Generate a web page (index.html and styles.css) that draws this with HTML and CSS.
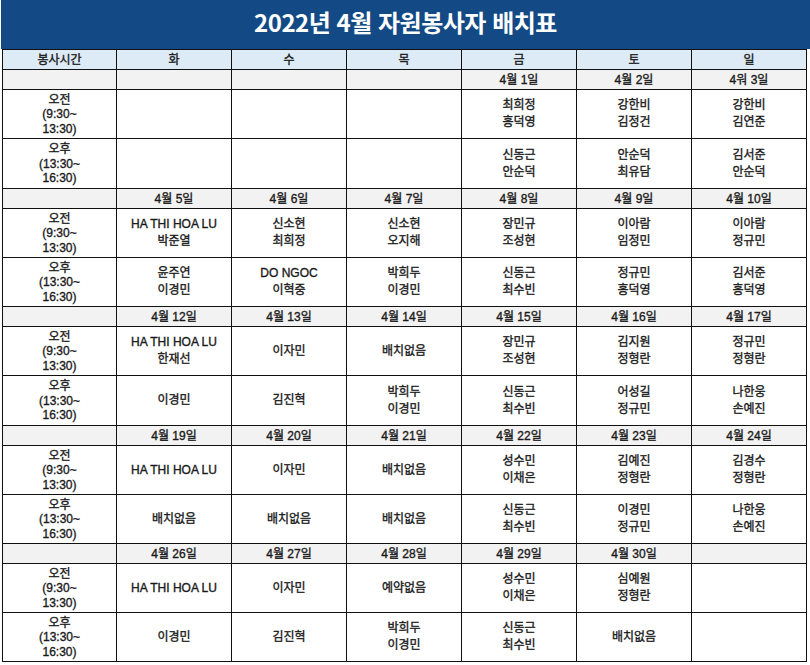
FILE: index.html
```html
<!DOCTYPE html>
<html lang="ko">
<head>
<meta charset="utf-8">
<title>2022년 4월 자원봉사자 배치표</title>
<link rel="stylesheet" href="styles.css">
</head>
<body>
<div class="title">2022년 4월 자원봉사자 배치표</div>
<table class="sched">
<colgroup><col class="c0"><col class="c"><col class="c"><col class="c"><col class="c"><col class="c"><col class="c"></colgroup>
<tr class="head"><td>봉사시간</td><td>화</td><td>수</td><td>목</td><td>금</td><td>토</td><td>일</td></tr>

<tr class="date"><td></td><td></td><td></td><td></td><td>4월 1일</td><td>4월 2일</td><td>4워 3일</td></tr>
<tr class="am"><td class="tm">오전<br>(9:30~<br>13:30)</td><td></td><td></td><td></td><td>최희정<br>홍덕영</td><td>강한비<br>김정건</td><td>강한비<br>김연준</td></tr>
<tr class="pm tall"><td class="tm">오후<br>(13:30~<br>16:30)</td><td></td><td></td><td></td><td>신동근<br>안순덕</td><td>안순덕<br>최유담</td><td>김서준<br>안순덕</td></tr>

<tr class="date"><td></td><td>4월 5일</td><td>4월 6일</td><td>4월 7일</td><td>4월 8일</td><td>4월 9일</td><td>4월 10일</td></tr>
<tr class="am"><td class="tm">오전<br>(9:30~<br>13:30)</td><td>HA THI HOA LU<br>박준열</td><td>신소현<br>최희정</td><td>신소현<br>오지해</td><td>장민규<br>조성현</td><td>이아람<br>임정민</td><td>이아람<br>정규민</td></tr>
<tr class="pm"><td class="tm">오후<br>(13:30~<br>16:30)</td><td>윤주연<br>이경민</td><td>DO NGOC<br>이혁중</td><td>박희두<br>이경민</td><td>신동근<br>최수빈</td><td>정규민<br>홍덕영</td><td>김서준<br>홍덕영</td></tr>

<tr class="date"><td></td><td>4월 12일</td><td>4월 13일</td><td>4월 14일</td><td>4월 15일</td><td>4월 16일</td><td>4월 17일</td></tr>
<tr class="am"><td class="tm">오전<br>(9:30~<br>13:30)</td><td>HA THI HOA LU<br>한재선</td><td>이자민</td><td>배치없음</td><td>장민규<br>조성현</td><td>김지원<br>정형란</td><td>정규민<br>정형란</td></tr>
<tr class="pm tall"><td class="tm">오후<br>(13:30~<br>16:30)</td><td>이경민</td><td>김진혁</td><td>박희두<br>이경민</td><td>신동근<br>최수빈</td><td>어성길<br>정규민</td><td>나한웅<br>손예진</td></tr>

<tr class="date"><td></td><td>4월 19일</td><td>4월 20일</td><td>4월 21일</td><td>4월 22일</td><td>4월 23일</td><td>4월 24일</td></tr>
<tr class="am"><td class="tm">오전<br>(9:30~<br>13:30)</td><td>HA THI HOA LU</td><td>이자민</td><td>배치없음</td><td>성수민<br>이채은</td><td>김예진<br>정형란</td><td>김경수<br>정형란</td></tr>
<tr class="pm"><td class="tm">오후<br>(13:30~<br>16:30)</td><td>배치없음</td><td>배치없음</td><td>배치없음</td><td>신동근<br>최수빈</td><td>이경민<br>정규민</td><td>나한웅<br>손예진</td></tr>

<tr class="date"><td></td><td>4월 26일</td><td>4월 27일</td><td>4월 28일</td><td>4월 29일</td><td>4월 30일</td><td></td></tr>
<tr class="am"><td class="tm">오전<br>(9:30~<br>13:30)</td><td>HA THI HOA LU</td><td>이자민</td><td>예약없음</td><td>성수민<br>이채은</td><td>심예원<br>정형란</td><td></td></tr>
<tr class="pm"><td class="tm">오후<br>(13:30~<br>16:30)</td><td>이경민</td><td>김진혁</td><td>박희두<br>이경민</td><td>신동근<br>최수빈</td><td>배치없음</td><td></td></tr>
</table>
</body>
</html>
```
FILE: styles.css
```css
html, body {
  margin: 0;
  padding: 0;
  background: #ffffff;
}
body {
  font-family: "Liberation Sans", "Noto Sans CJK KR", sans-serif;
  color: #1a1a1a;
}
.title {
  margin-left: 1px;
  height: 49px;
  background: #134a86;
  color: #ffffff;
  font-family: "Noto Sans CJK KR", sans-serif;
  font-weight: 700;
  font-size: 24px;
  line-height: 44px;
  text-align: center;
  letter-spacing: -0.5px;
}
.sched {
  margin-left: 2px;
  border-collapse: collapse;
  table-layout: fixed;
  width: 805px;
  font-size: 12px;
  font-weight: 400;
  -webkit-text-stroke: 0.35px #1a1a1a;
}
.c0 { width: 114px; }
.c { width: 115px; }
.sched td {
  border: 1px solid #111111;
  text-align: center;
  vertical-align: middle;
  padding: 0;
  line-height: 17px;
  overflow: hidden;
  white-space: nowrap;
}
.head td {
  background: #ddebf7;
  height: 19px;
  line-height: 18px;
}
.date td {
  background: #f2f2f2;
  height: 19px;
  line-height: 18px;
}
.am td { height: 47px; }
.pm td { height: 47px; }
.pm.tall td { height: 48px; }
.sched td.tm {
  line-height: 14.5px;
  padding-top: 1px;
}
```
